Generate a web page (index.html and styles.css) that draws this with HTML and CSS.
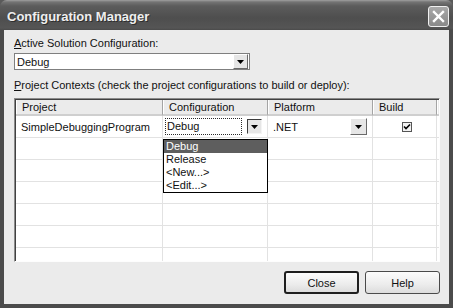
FILE: index.html
```html
<!DOCTYPE html>
<html lang="en">
<head>
    <meta charset="UTF-8">
    <title>Configuration Manager</title>
    <link rel="stylesheet" href="styles.css">
</head>
<body>

    <div class="window">
        <div class="titlebar">
            <span class="title">Configuration Manager</span>
            <div class="close-btn">
                <svg width="13" height="13" viewBox="0 0 13 13">
                    <path d="M2 2 L11 11 M11 2 L2 11" stroke="#fff" stroke-width="2.4" stroke-linecap="square"/>
                </svg>
            </div>
        </div>

        <div class="dialog">
            <div class="label"><u>A</u>ctive Solution Configuration:</div>
            <div class="combo solution-combo">
                <span class="combo-text">Debug</span>
                <span class="drop-btn">
                    <svg width="7" height="4" viewBox="0 0 7 4"><path d="M0 0 H7 L3.5 4 Z" fill="#000"/></svg>
                </span>
            </div>

            <div class="label contexts-label"><u>P</u>roject Contexts (check the project configurations to build or deploy):</div>

            <div class="grid">
                <div class="grid-row head">
                    <div class="cell">Project</div>
                    <div class="cell">Configuration</div>
                    <div class="cell">Platform</div>
                    <div class="cell">Build</div>
                    <div class="cell filler"></div>
                </div>
                <div class="grid-row">
                    <div class="cell">SimpleDebuggingProgram</div>
                    <div class="cell config-cell">
                        <span class="edit-box">Debug</span>
                        <span class="drop-btn pressed">
                            <svg width="7" height="4" viewBox="0 0 7 4"><path d="M0 0 H7 L3.5 4 Z" fill="#000"/></svg>
                        </span>
                    </div>
                    <div class="cell platform-cell">
                        <span>.NET</span>
                        <span class="drop-btn">
                            <svg width="7" height="4" viewBox="0 0 7 4"><path d="M0 0 H7 L3.5 4 Z" fill="#000"/></svg>
                        </span>
                    </div>
                    <div class="cell build-cell">
                        <span class="checkbox">
                            <svg width="8" height="8" viewBox="0 0 8 8"><path d="M1 3.5 L3 5.5 L7 1.5" stroke="#000" stroke-width="1.6" fill="none"/></svg>
                        </span>
                    </div>
                    <div class="cell filler"></div>
                </div>
                <div class="grid-row"><div class="cell"></div><div class="cell"></div><div class="cell"></div><div class="cell"></div><div class="cell filler"></div></div>
                <div class="grid-row"><div class="cell"></div><div class="cell"></div><div class="cell"></div><div class="cell"></div><div class="cell filler"></div></div>
                <div class="grid-row"><div class="cell"></div><div class="cell"></div><div class="cell"></div><div class="cell"></div><div class="cell filler"></div></div>
                <div class="grid-row"><div class="cell"></div><div class="cell"></div><div class="cell"></div><div class="cell"></div><div class="cell filler"></div></div>
                <div class="grid-row"><div class="cell"></div><div class="cell"></div><div class="cell"></div><div class="cell"></div><div class="cell filler"></div></div>
                <div class="grid-row"><div class="cell"></div><div class="cell"></div><div class="cell"></div><div class="cell"></div><div class="cell filler"></div></div>

                <!-- open dropdown of the Configuration combo -->
                <div class="dropdown-list">
                    <div class="item selected">Debug</div>
                    <div class="item">Release</div>
                    <div class="item">&lt;New...&gt;</div>
                    <div class="item">&lt;Edit...&gt;</div>
                </div>
            </div>

            <div class="buttons">
                <button class="btn default">Close</button>
                <button class="btn">Help</button>
            </div>
        </div>
    </div>

</body>
</html>
```

FILE: styles.css
```css
body {
    margin: 0;
    padding: 0;
    background-color: #5a5a5a;
    font-family: "Liberation Sans", Arial, sans-serif;
    font-size: 11px;
    color: #111;
}
.window {
    width: 453px;
    height: 308px;
    display: flex;
    flex-direction: column;
}
/* Title bar */
.titlebar {
    height: 30px;
    flex: none;
    display: flex;
    align-items: center;
    justify-content: space-between;
    padding: 0 4px 0 7px;
    box-sizing: border-box;
    border-radius: 7px 7px 0 0;
    background: linear-gradient(#a0a0a0 0, #747474 2px, #5c5c5c 6px, #4e4e4e 18px, #555 28px, #4a4a4a 30px);
}
.title {
    font-weight: bold;
    font-size: 13px;
    color: #eeeeee;
    text-shadow: 1px 1px 0 #2e2e2e;
    margin-top: 2px;
}
.close-btn {
    width: 21px;
    height: 21px;
    box-sizing: border-box;
    border: 1px solid #f0f0f0;
    border-radius: 3px;
    background: linear-gradient(#a8a8a8, #8a8a8a);
    display: flex;
    align-items: center;
    justify-content: center;
    margin-top: 2px;
}
/* Dialog body */
.dialog {
    flex: 1;
    background-color: #ebebeb;
    border: 4px solid #4b4b4b;
    border-top: none;
    padding: 7px 9px 0 10px;
    display: flex;
    flex-direction: column;
}
.label {
    line-height: 13px;
    height: 13px;
    white-space: nowrap;
}
.combo {
    display: flex;
    align-items: center;
    background: #fff;
    box-sizing: border-box;
}
.solution-combo {
    margin-top: 3px;
    width: 236px;
    height: 17px;
    border: 1px solid #7f7f7f;
    padding: 0 1px 0 2px;
    justify-content: space-between;
}
.drop-btn {
    width: 15px;
    height: 15px;
    box-sizing: border-box;
    background: #e6e6e6;
    border: 1px solid;
    border-color: #fff #6a6a6a #6a6a6a #fff;
    display: flex;
    align-items: center;
    justify-content: center;
}
.drop-btn.pressed {
    border-color: #3c3c3c #f4f4f4 #f4f4f4 #3c3c3c;
}
.contexts-label {
    margin-top: 9px;
}
/* Project grid */
.grid {
    position: relative;
    margin-top: 6px;
    height: 164px;
    box-sizing: border-box;
    border: 1px solid;
    border-color: #8a8a8a #fdfdfd #fdfdfd #8a8a8a;
    box-shadow: inset 1px 1px 0 #404040;
    padding: 1px 0 0 1px;
    background: #fff;
    overflow: hidden;
}
.grid-row {
    display: grid;
    grid-template-columns: 147px 105px 105px 64px 2px;
    height: 22px;
}
.grid-row .cell {
    border-right: 1px solid #e2e2e2;
    border-bottom: 1px solid #e2e2e2;
    padding-left: 5px;
    display: flex;
    align-items: center;
    white-space: nowrap;
    overflow: hidden;
}
.grid-row .filler {
    border-right: none;
    padding: 0;
}
.grid-row.head {
    height: 16px;
}
.grid-row.head .cell {
    background: #ebebeb;
    border-right: 1px solid #a4a4a4;
    border-bottom: 2px solid #cfcfcf;
    box-shadow: inset 1px 0 0 #fff;
    padding-left: 6px;
}
.grid-row.head .filler {
    border-right: none;
}
.config-cell {
    gap: 5px;
}
.grid-row .config-cell {
    padding-left: 2px;
}
.edit-box {
    width: 77px;
    height: 17px;
    box-sizing: border-box;
    border: 1px dotted #2a2a2a;
    padding-left: 1px;
    line-height: 15px;
}
.grid-row .platform-cell {
    justify-content: space-between;
    padding: 0 5px 0 5px;
}
.platform-cell .drop-btn {
    width: 17px;
    height: 17px;
}
.grid-row .build-cell {
    justify-content: center;
    padding: 0 0 0 4px;
}
.checkbox {
    width: 10px;
    height: 10px;
    box-sizing: border-box;
    border: 1px solid #555;
    background: #f2f2f2;
    display: flex;
    align-items: center;
    justify-content: center;
}
.dropdown-list {
    position: absolute;
    left: 148px;
    top: 40px;
    width: 105px;
    box-sizing: border-box;
    border: 1px solid #000;
    background: #fff;
}
.dropdown-list .item {
    height: 13px;
    line-height: 13px;
    padding-left: 2px;
}
.dropdown-list .selected {
    background: #5e5e5e;
    color: #fff;
}
/* Bottom buttons */
.buttons {
    margin-top: 9px;
    display: flex;
    justify-content: flex-end;
    gap: 6px;
}
.btn {
    width: 75px;
    height: 23px;
    font-family: "Liberation Sans", Arial, sans-serif;
    font-size: 11px;
    color: #111;
    background: linear-gradient(#fcfcfc, #ececec 60%, #dcdcdc);
    border: 1px solid #4a4a4a;
    border-radius: 3px;
    padding: 0;
}
.btn.default {
    border: 2px solid #1e1e1e;
}
```
